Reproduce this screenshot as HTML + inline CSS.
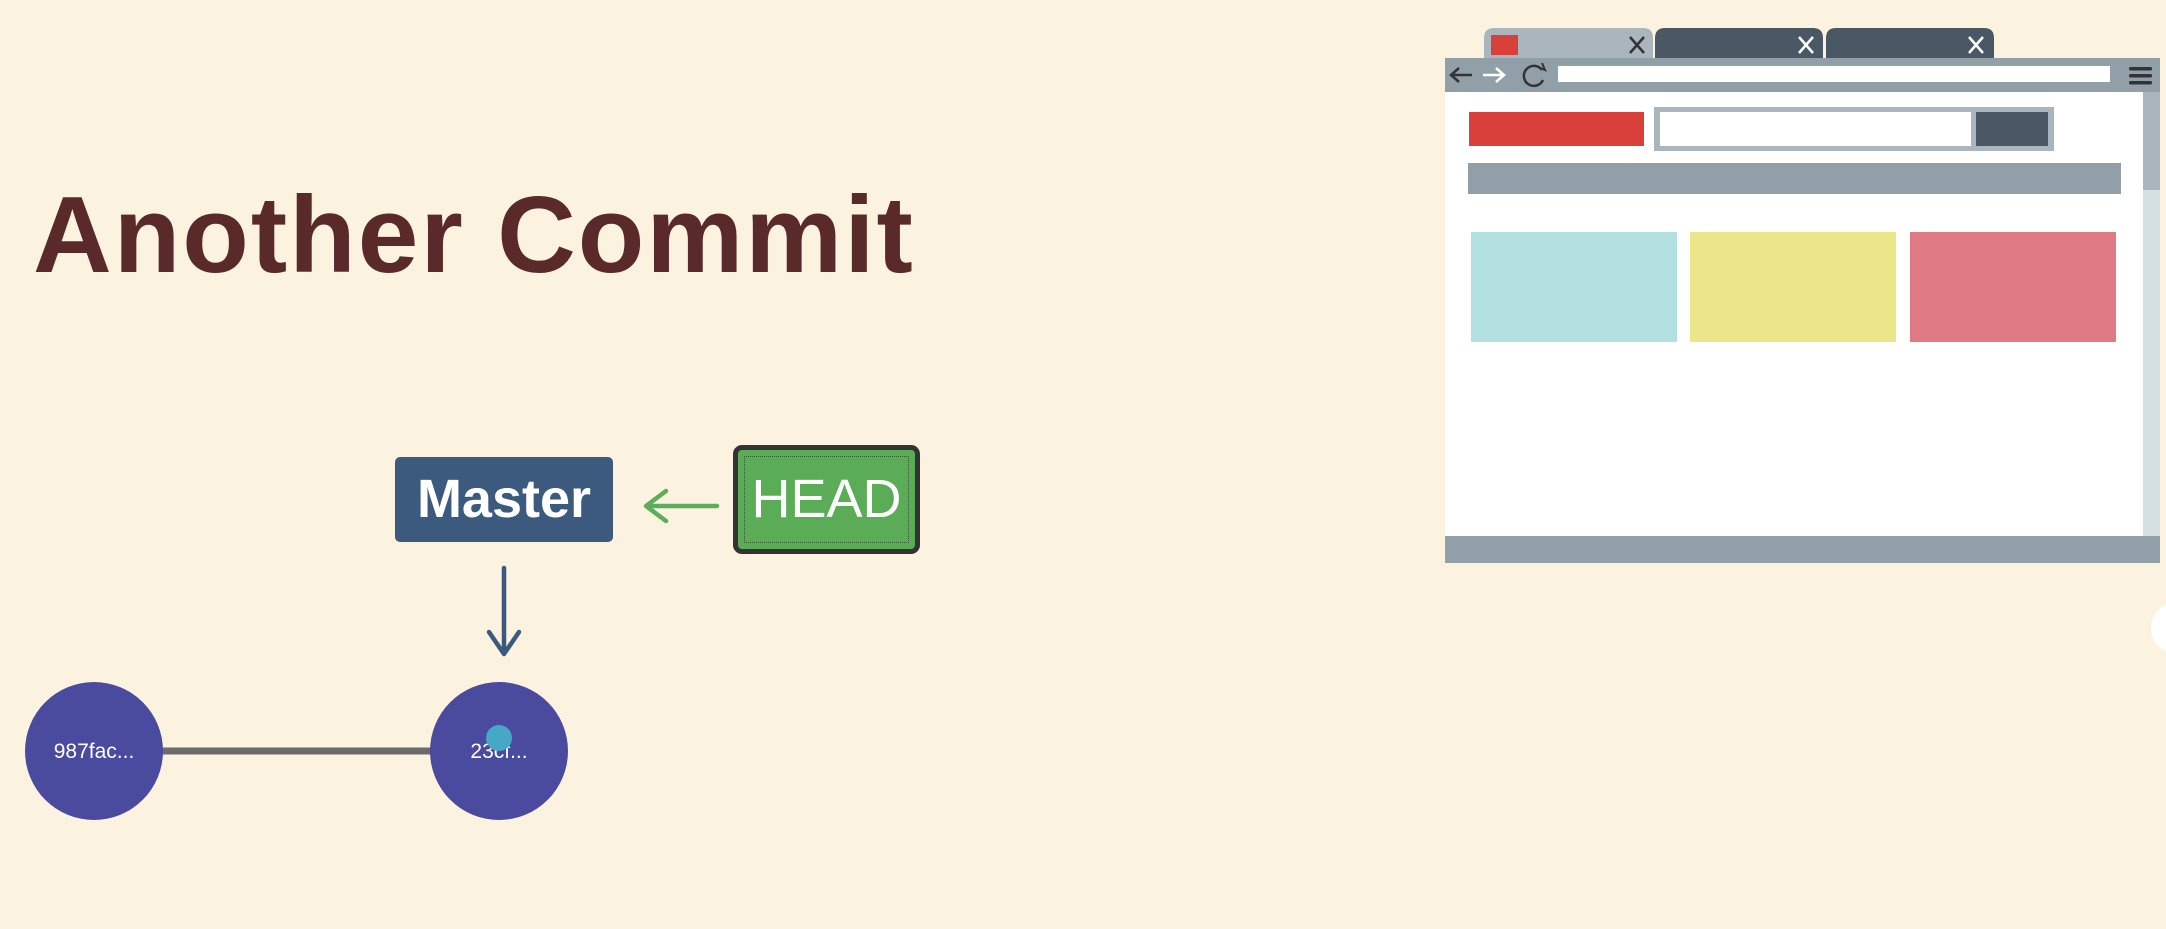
<!DOCTYPE html>
<html><head><meta charset="utf-8"><style>
html,body{margin:0;padding:0}
body{width:2166px;height:929px;background:#fcf2e0;position:relative;overflow:hidden;font-family:"Liberation Sans",sans-serif}
.a{position:absolute}
</style></head><body>
<div class="a" style="left:33px;top:181px;font-size:109px;line-height:1;font-weight:bold;color:#5a2a2a;white-space:nowrap;letter-spacing:2px">Another Commit</div>

<div class="a" style="left:395px;top:457px;width:218px;height:85px;background:#3b5a7d;border-radius:5px;color:#fff;font-weight:bold;font-size:54px;line-height:85px;text-align:center">Master</div>

<div class="a" style="left:733px;top:445px;width:187px;height:109px;box-sizing:border-box;border:5px solid #333;border-radius:9px;background:#5aac56">
<div style="position:absolute;left:6px;top:6px;right:6px;bottom:6px;border:1.5px dotted #2f5c2f;"></div>
<div style="position:absolute;left:0;right:0;top:0;bottom:0;color:#fff;font-size:54px;line-height:99px;text-align:center">HEAD</div>
</div>

<svg class="a" style="left:0;top:0" width="2166" height="929">
<path d="M717 506 H646 M666 491 L646 506 L666 521" stroke="#5cad5c" stroke-width="4.5" fill="none" stroke-linecap="round" stroke-linejoin="round"/>
<path d="M504 568 V654 M489 632 L504 654 L519 632" stroke="#3b5a7d" stroke-width="4.5" fill="none" stroke-linecap="round" stroke-linejoin="round"/>
<line x1="160" y1="751" x2="435" y2="751" stroke="#6b6b6b" stroke-width="7"/>
<circle cx="94" cy="751" r="69" fill="#4a4a9e"/>
<circle cx="499" cy="751" r="69" fill="#4a4a9e"/>
<text x="94" y="758" fill="#fff" font-size="21" text-anchor="middle" font-family="Liberation Sans">987fac...</text>
<text x="499" y="758" fill="#fff" font-size="21" text-anchor="middle" font-family="Liberation Sans">23cf...</text>
<circle cx="499" cy="738" r="13" fill="#45a8c4"/>
<circle cx="2177" cy="628" r="26" fill="#fff"/>

<path d="M1484 58 V38 Q1484 28 1494 28 H1643 Q1653 28 1653 38 V58 Z" fill="#aab5bd"/>
<path d="M1655 58 V38 Q1655 28 1665 28 H1813 Q1823 28 1823 38 V58 Z" fill="#4a5866"/>
<path d="M1826 58 V38 Q1826 28 1836 28 H1984 Q1994 28 1994 38 V58 Z" fill="#4a5866"/>
<rect x="1491" y="35" width="27" height="20" fill="#d9403a"/>
<path d="M1630 37 L1644 53 M1644 37 L1630 53" stroke="#333" stroke-width="2.5"/>
<path d="M1799 37 L1813 53 M1813 37 L1799 53" stroke="#fff" stroke-width="2.5"/>
<path d="M1969 37 L1983 53 M1983 37 L1969 53" stroke="#fff" stroke-width="2.5"/>
<rect x="1445" y="58" width="715" height="34" fill="#91a0a8"/>
<path d="M1472 75 H1451 M1459 68 L1451 75 L1459 82" stroke="#333" stroke-width="2.5" fill="none"/>
<path d="M1483 75 H1504 M1496 68 L1504 75 L1496 82" stroke="#fff" stroke-width="2.5" fill="none"/>
<path d="M1542 70 A10 10 0 1 0 1543 80" stroke="#333" stroke-width="2.5" fill="none"/>
<path d="M1538 67 L1545 70 L1542 63" stroke="#333" stroke-width="2" fill="none"/>
<rect x="1558" y="66" width="552" height="16" fill="#fff"/>
<rect x="2129" y="67" width="23" height="3.5" rx="1.5" fill="#333"/>
<rect x="2129" y="74" width="23" height="3.5" rx="1.5" fill="#333"/>
<rect x="2129" y="81" width="23" height="3.5" rx="1.5" fill="#333"/>
<rect x="1445" y="92" width="715" height="444" fill="#fff"/>
<rect x="2143" y="92" width="17" height="444" fill="#d5e0e3"/>
<rect x="2143" y="92" width="17" height="98" fill="#aab5bd"/>
<rect x="1469" y="112" width="175" height="34" fill="#d9403a"/>
<rect x="1654" y="107" width="400" height="44" fill="#aab5bd"/>
<rect x="1660" y="112" width="311" height="34" fill="#fff"/>
<rect x="1976" y="112" width="72" height="34" fill="#4a5866"/>
<rect x="1468" y="163" width="653" height="31" fill="#929fa8"/>
<rect x="1471" y="232" width="206" height="110" fill="#b2dfe0"/>
<rect x="1690" y="232" width="206" height="110" fill="#ebe689"/>
<rect x="1910" y="232" width="206" height="110" fill="#df7983"/>
<rect x="1445" y="536" width="715" height="27" fill="#91a0a8"/>
</svg>
</body></html>
